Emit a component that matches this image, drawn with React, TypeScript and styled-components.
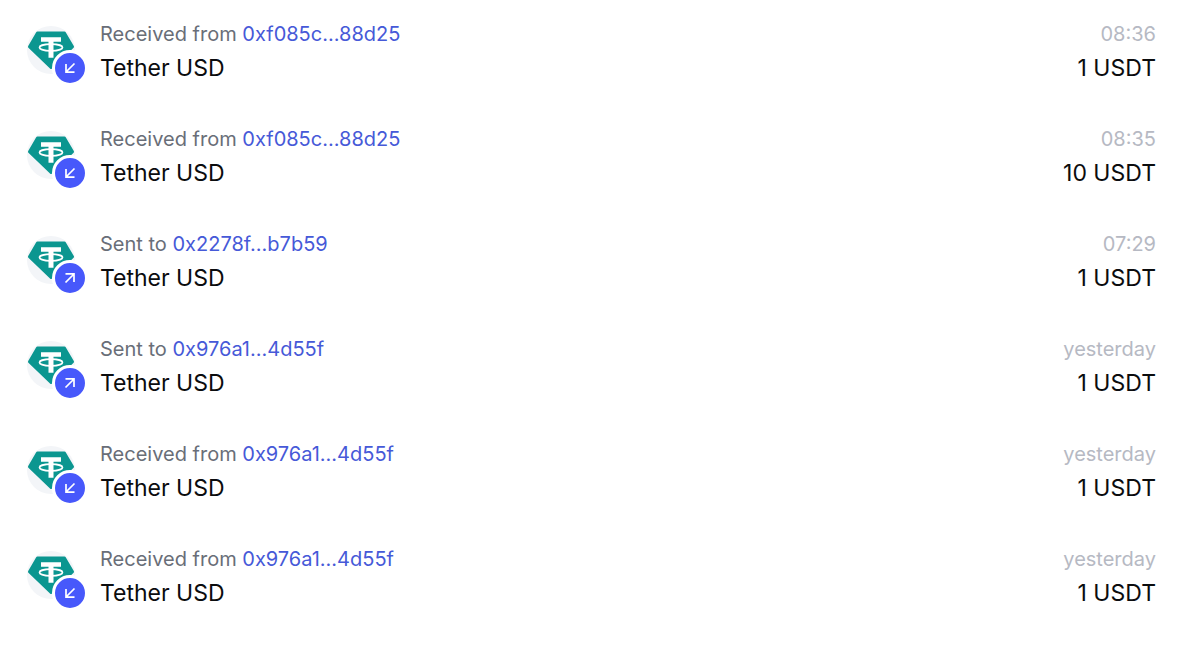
import React from "react";
import styled, { createGlobalStyle } from "styled-components";

const GlobalStyle = createGlobalStyle`
  *, *::before, *::after { box-sizing: border-box; }
  body {
    margin: 0;
    background: #ffffff;
    color: #0b0c0e;
    font-family: Inter, "Liberation Sans", sans-serif;
  }
`;

type Direction = "received" | "sent";

interface Transfer {
  direction: Direction;
  address: string;
  time: string;
  amount: string;
}

const transfers: Transfer[] = [
  { direction: "received", address: "0xf085c...88d25", time: "08:36", amount: "1 USDT" },
  { direction: "received", address: "0xf085c...88d25", time: "08:35", amount: "10 USDT" },
  { direction: "sent", address: "0x2278f...b7b59", time: "07:29", amount: "1 USDT" },
  { direction: "sent", address: "0x976a1...4d55f", time: "yesterday", amount: "1 USDT" },
  { direction: "received", address: "0x976a1...4d55f", time: "yesterday", amount: "1 USDT" },
  { direction: "received", address: "0x976a1...4d55f", time: "yesterday", amount: "1 USDT" },
];

const List = styled.ul`
  display: flex;
  flex-direction: column;
  gap: 37px;
  margin: 0;
  padding: 17px 25px 37px 27px;
  list-style: none;
`;

const Row = styled.li`
  display: flex;
  align-items: center;
  gap: 25px;
`;

const TokenIcon = styled.div`
  position: relative;
  flex: none;
  width: 48px;
  height: 48px;
  margin-bottom: 2px;
  border-radius: 50%;
  background: #f3f5f8;
`;

const TokenLogo = styled.svg`
  display: block;
  width: 48px;
  height: 48px;
`;

const Badge = styled.span`
  position: absolute;
  right: -13px;
  bottom: -12px;
  display: flex;
  width: 36px;
  height: 36px;
  border: 3px solid #ffffff;
  border-radius: 50%;
  background: #4758fb;
`;

const Arrow = styled.svg<{ $direction: Direction }>`
  width: 30px;
  height: 30px;
  transform: rotate(${(p) => (p.$direction === "sent" ? 180 : 0)}deg);
`;

const Column = styled.div<{ $align: "left" | "right" }>`
  flex: ${(p) => (p.$align === "left" ? "1 1 auto" : "none")};
  min-width: 0;
  text-align: ${(p) => p.$align};
`;

const Caption = styled.div<{ $muted?: boolean }>`
  color: ${(p) => (p.$muted ? "#b6b9c3" : "#696e78")};
  font-size: 20px;
  line-height: 34px;
`;

const Value = styled.div`
  font-size: 23px;
  line-height: 34px;
`;

const Address = styled.a`
  color: #4659d8;
  text-decoration: none;
`;

function Tether() {
  return (
    <TokenLogo viewBox="0 0 48 48" aria-hidden="true">
      <path
        d="M10.5 5.5h27a1.4 1.4 0 0 1 1.2.7l8.1 13.8a1.4 1.4 0 0 1-.2 1.7L25 42.6a1.4 1.4 0 0 1-2 0L1.4 21.7a1.4 1.4 0 0 1-.2-1.7L9.2 6.2a1.5 1.5 0 0 1 1.3-.7z"
        fill="#0b9690"
      />
      <path d="M14 11.3h20v4.5h-7.5V31.8h-5V15.8H14z" fill="#ffffff" />
      <ellipse cx="24" cy="21.5" rx="11.5" ry="3.3" fill="none" stroke="#ffffff" strokeWidth="1.7" />
    </TokenLogo>
  );
}

function TransferRow({ direction, address, time, amount }: Transfer) {
  return (
    <Row>
      <TokenIcon>
        <Tether />
        <Badge>
          <Arrow $direction={direction} viewBox="0 0 30 30" aria-hidden="true">
            <path
              d="M19.5 10.5L11 19M11 11V19.2h8.5"
              fill="none"
              stroke="#ffffff"
              strokeWidth="1.7"
            />
          </Arrow>
        </Badge>
      </TokenIcon>
      <Column $align="left">
        <Caption>
          {direction === "sent" ? "Sent to " : "Received from "}
          <Address href={`#${address}`}>{address}</Address>
        </Caption>
        <Value>Tether USD</Value>
      </Column>
      <Column $align="right">
        <Caption $muted>{time}</Caption>
        <Value>{amount}</Value>
      </Column>
    </Row>
  );
}

export default function App() {
  return (
    <>
      <GlobalStyle />
      <List>
        {transfers.map((transfer, index) => (
          <TransferRow key={index} {...transfer} />
        ))}
      </List>
    </>
  );
}
